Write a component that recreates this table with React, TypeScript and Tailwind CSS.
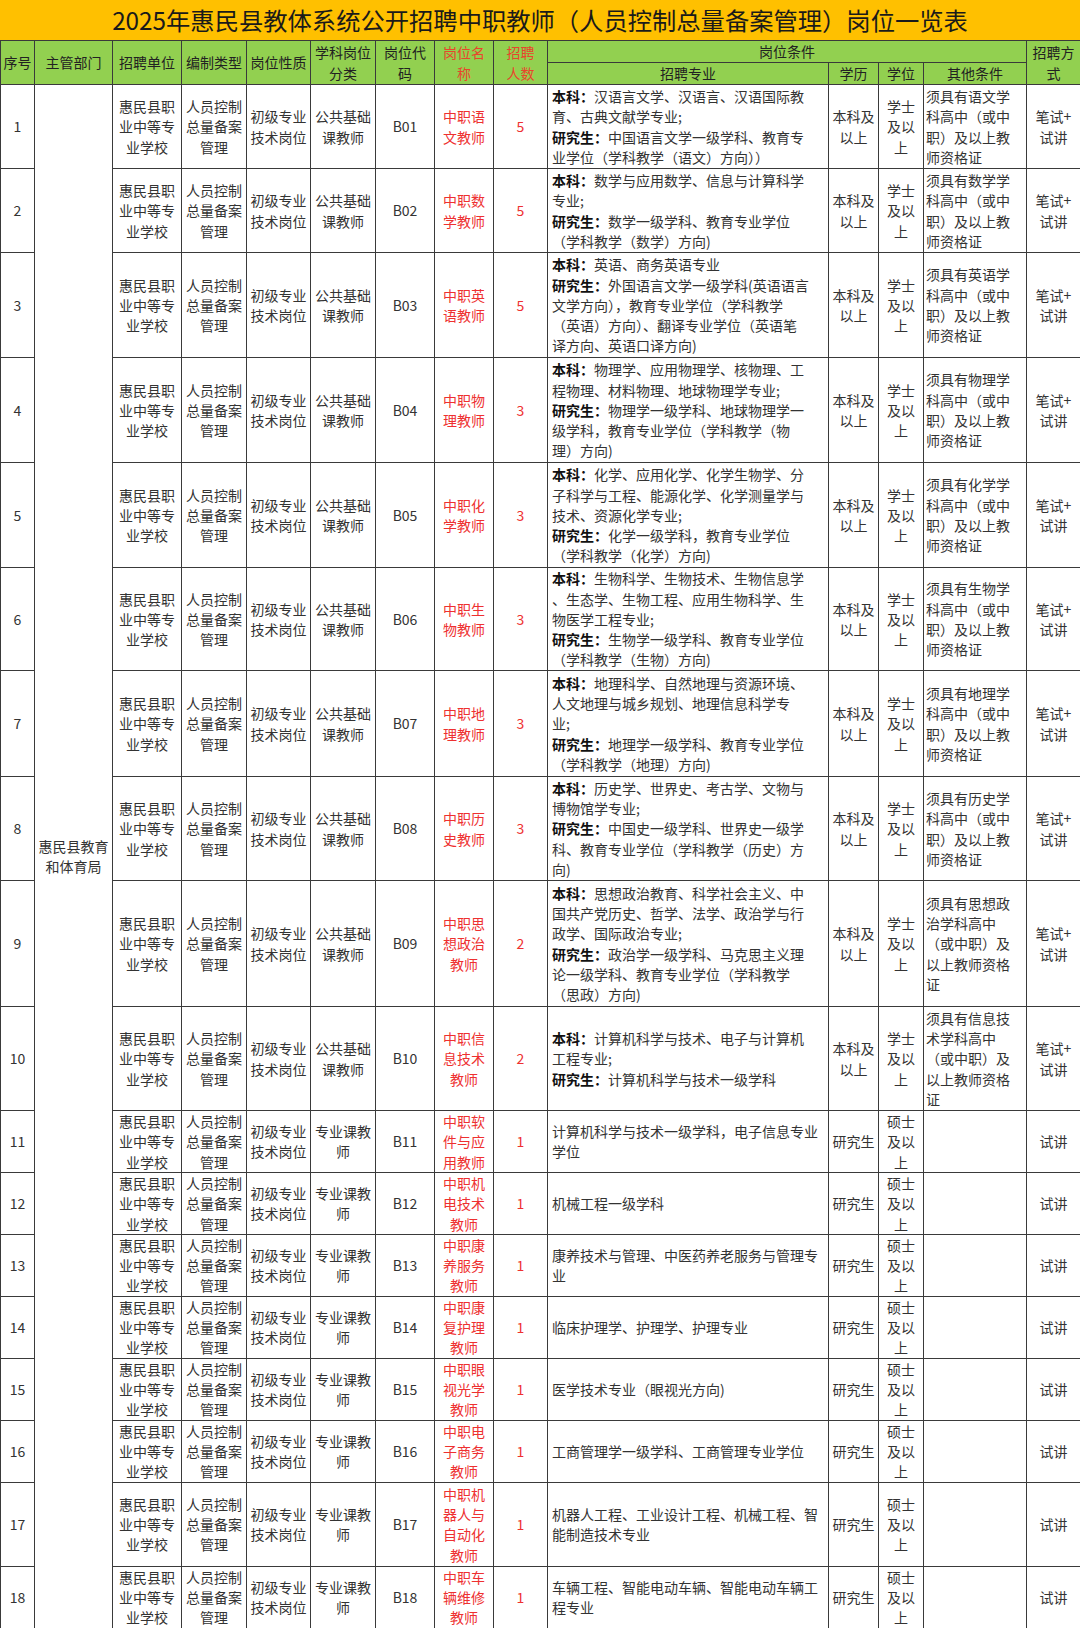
import React from "react";

type Row = {
  name: string[];
  num: string;
  cat: string[];
  major: string[];
  edu: string[];
  degree: string[];
  other: string[];
  method: string[];
  h: number;
};

const pubCat = ["公共基础", "课教师"];
const proCat = ["专业课教", "师"];
const bk = ["本科及", "以上"];
const yjs = ["研究生"];
const xs = ["学士", "及以", "上"];
const ss = ["硕士", "及以", "上"];
const bs = ["笔试+", "试讲"];
const sj = ["试讲"];

const cert = (s: string) => [`须具有${s}学`, "科高中（或中", "职）及以上教", "师资格证"];

const rows: Row[] = [
  {
    name: ["中职语", "文教师"], num: "5", cat: pubCat, edu: bk, degree: xs, method: bs, h: 84,
    other: cert("语文"),
    major: ["本科：汉语言文学、汉语言、汉语国际教", "育、古典文献学专业;", "研究生：中国语言文学一级学科、教育专", "业学位（学科教学（语文）方向））"],
  },
  {
    name: ["中职数", "学教师"], num: "5", cat: pubCat, edu: bk, degree: xs, method: bs, h: 84,
    other: cert("数学"),
    major: ["本科：数学与应用数学、信息与计算科学", "专业;", "研究生：数学一级学科、教育专业学位", "（学科教学（数学）方向)"],
  },
  {
    name: ["中职英", "语教师"], num: "5", cat: pubCat, edu: bk, degree: xs, method: bs, h: 105,
    other: cert("英语"),
    major: ["本科：英语、商务英语专业", "研究生：外国语言文学一级学科(英语语言", "文学方向），教育专业学位（学科教学", "（英语）方向）、翻译专业学位（英语笔", "译方向、英语口译方向)"],
  },
  {
    name: ["中职物", "理教师"], num: "3", cat: pubCat, edu: bk, degree: xs, method: bs, h: 105,
    other: cert("物理"),
    major: ["本科：物理学、应用物理学、核物理、工", "程物理、材料物理、地球物理学专业;", "研究生：物理学一级学科、地球物理学一", "级学科，教育专业学位（学科教学（物", "理）方向)"],
  },
  {
    name: ["中职化", "学教师"], num: "3", cat: pubCat, edu: bk, degree: xs, method: bs, h: 105,
    other: cert("化学"),
    major: ["本科：化学、应用化学、化学生物学、分", "子科学与工程、能源化学、化学测量学与", "技术、资源化学专业;", "研究生：化学一级学科，教育专业学位", "（学科教学（化学）方向)"],
  },
  {
    name: ["中职生", "物教师"], num: "3", cat: pubCat, edu: bk, degree: xs, method: bs, h: 103,
    other: cert("生物"),
    major: ["本科：生物科学、生物技术、生物信息学", "、生态学、生物工程、应用生物科学、生", "物医学工程专业;", "研究生：生物学一级学科、教育专业学位", "（学科教学（生物）方向)"],
  },
  {
    name: ["中职地", "理教师"], num: "3", cat: pubCat, edu: bk, degree: xs, method: bs, h: 106,
    other: cert("地理"),
    major: ["本科：地理科学、自然地理与资源环境、", "人文地理与城乡规划、地理信息科学专", "业;", "研究生：地理学一级学科、教育专业学位", "（学科教学（地理）方向)"],
  },
  {
    name: ["中职历", "史教师"], num: "3", cat: pubCat, edu: bk, degree: xs, method: bs, h: 104,
    other: cert("历史"),
    major: ["本科：历史学、世界史、考古学、文物与", "博物馆学专业;", "研究生：中国史一级学科、世界史一级学", "科、教育专业学位（学科教学（历史）方", "向)"],
  },
  {
    name: ["中职思", "想政治", "教师"], num: "2", cat: pubCat, edu: bk, degree: xs, method: bs, h: 126,
    other: ["须具有思想政", "治学科高中", "（或中职）及", "以上教师资格", "证"],
    major: ["本科：思想政治教育、科学社会主义、中", "国共产党历史、哲学、法学、政治学与行", "政学、国际政治专业;", "研究生：政治学一级学科、马克思主义理", "论一级学科、教育专业学位（学科教学", "（思政）方向)"],
  },
  {
    name: ["中职信", "息技术", "教师"], num: "2", cat: pubCat, edu: bk, degree: xs, method: bs, h: 104,
    other: ["须具有信息技", "术学科高中", "（或中职）及", "以上教师资格", "证"],
    major: ["本科：计算机科学与技术、电子与计算机", "工程专业;", "研究生：计算机科学与技术一级学科"],
  },
  {
    name: ["中职软", "件与应", "用教师"], num: "1", cat: proCat, edu: yjs, degree: ss, method: sj, h: 61, other: [],
    major: ["计算机科学与技术一级学科，电子信息专业", "学位"],
  },
  {
    name: ["中职机", "电技术", "教师"], num: "1", cat: proCat, edu: yjs, degree: ss, method: sj, h: 62, other: [],
    major: ["机械工程一级学科"],
  },
  {
    name: ["中职康", "养服务", "教师"], num: "1", cat: proCat, edu: yjs, degree: ss, method: sj, h: 61, other: [],
    major: ["康养技术与管理、中医药养老服务与管理专", "业"],
  },
  {
    name: ["中职康", "复护理", "教师"], num: "1", cat: proCat, edu: yjs, degree: ss, method: sj, h: 62, other: [],
    major: ["临床护理学、护理学、护理专业"],
  },
  {
    name: ["中职眼", "视光学", "教师"], num: "1", cat: proCat, edu: yjs, degree: ss, method: sj, h: 62, other: [],
    major: ["医学技术专业（眼视光方向)"],
  },
  {
    name: ["中职电", "子商务", "教师"], num: "1", cat: proCat, edu: yjs, degree: ss, method: sj, h: 62, other: [],
    major: ["工商管理学一级学科、工商管理专业学位"],
  },
  {
    name: ["中职机", "器人与", "自动化", "教师"], num: "1", cat: proCat, edu: yjs, degree: ss, method: sj, h: 84, other: [],
    major: ["机器人工程、工业设计工程、机械工程、智", "能制造技术专业"],
  },
  {
    name: ["中职车", "辆维修", "教师"], num: "1", cat: proCat, edu: yjs, degree: ss, method: sj, h: 62, other: [],
    major: ["车辆工程、智能电动车辆、智能电动车辆工", "程专业"],
  },
];

function Lines({ lines }: { lines: string[] }) {
  return (
    <>
      {lines.map((l, i) => (
        <div key={i} className="whitespace-nowrap">
          {l}
        </div>
      ))}
    </>
  );
}

function MajorLine({ text }: { text: string }) {
  const label = ["本科：", "研究生："].find((p) => text.startsWith(p));
  return (
    <div className="whitespace-nowrap">
      {label ? (
        <>
          <span className="font-bold text-[#111]">{label}</span>
          {text.slice(label.length)}
        </>
      ) : (
        text
      )}
    </div>
  );
}

const th = "border border-[#3a3a3a] bg-[#92d050] font-normal text-center align-middle p-0 leading-[20.3px] text-[#222]";
const td = "border border-[#3a3a3a] text-center align-middle p-0 leading-[20.3px]";

export default function App() {
  return (
    <div className="w-[1080px] h-[1628px] overflow-hidden bg-white font-['Noto_Sans_CJK_SC',sans-serif] text-[14px] text-[#333]">
      <div className="h-[40px] bg-[#ffc000] flex items-center justify-center text-[24.3px] text-[#1a1a1a] leading-none">
        2025年惠民县教体系统公开招聘中职教师（人员控制总量备案管理）岗位一览表
      </div>
      <table className="w-[1080px] table-fixed border-collapse">
        <colgroup>
          <col className="w-[34px]" />
          <col className="w-[78px]" />
          <col className="w-[69px]" />
          <col className="w-[65px]" />
          <col className="w-[64px]" />
          <col className="w-[65px]" />
          <col className="w-[59px]" />
          <col className="w-[59px]" />
          <col className="w-[54px]" />
          <col className="w-[281px]" />
          <col className="w-[50px]" />
          <col className="w-[45px]" />
          <col className="w-[103px]" />
          <col className="w-[54px]" />
        </colgroup>
        <thead>
          <tr className="h-[22px]">
            <th rowSpan={2} className={th}>序号</th>
            <th rowSpan={2} className={th}>主管部门</th>
            <th rowSpan={2} className={th}>招聘单位</th>
            <th rowSpan={2} className={th}>编制类型</th>
            <th rowSpan={2} className={th}>岗位性质</th>
            <th rowSpan={2} className={th}><Lines lines={["学科岗位", "分类"]} /></th>
            <th rowSpan={2} className={th}><Lines lines={["岗位代", "码"]} /></th>
            <th rowSpan={2} className={`${th} !text-[#e8452c]`}><Lines lines={["岗位名", "称"]} /></th>
            <th rowSpan={2} className={`${th} !text-[#e8452c]`}><Lines lines={["招聘", "人数"]} /></th>
            <th colSpan={4} className={th}>岗位条件</th>
            <th rowSpan={2} className={th}><Lines lines={["招聘方", "式"]} /></th>
          </tr>
          <tr className="h-[22px]">
            <th className={th}>招聘专业</th>
            <th className={th}>学历</th>
            <th className={th}>学位</th>
            <th className={th}>其他条件</th>
          </tr>
        </thead>
        <tbody>
          {rows.map((r, i) => (
            <tr key={i} style={{ height: r.h }}>
              <td className={td}>{i + 1}</td>
              {i === 0 && (
                <td rowSpan={rows.length} className={td}>
                  <Lines lines={["惠民县教育", "和体育局"]} />
                </td>
              )}
              <td className={td}><Lines lines={["惠民县职", "业中等专", "业学校"]} /></td>
              <td className={td}><Lines lines={["人员控制", "总量备案", "管理"]} /></td>
              <td className={td}><Lines lines={["初级专业", "技术岗位"]} /></td>
              <td className={td}><Lines lines={r.cat} /></td>
              <td className={td}>{`B${String(i + 1).padStart(2, "0")}`}</td>
              <td className={`${td} text-[#ee3030]`}><Lines lines={r.name} /></td>
              <td className={`${td} text-[#ee3030]`}>{r.num}</td>
              <td className={`${td} !text-left pl-[4px]`}>
                {r.major.map((m, j) => (
                  <MajorLine key={j} text={m} />
                ))}
              </td>
              <td className={td}><Lines lines={r.edu} /></td>
              <td className={td}><Lines lines={r.degree} /></td>
              <td className={`${td} !text-left pl-[2px]`}><Lines lines={r.other} /></td>
              <td className={td}><Lines lines={r.method} /></td>
            </tr>
          ))}
        </tbody>
      </table>
    </div>
  );
}
